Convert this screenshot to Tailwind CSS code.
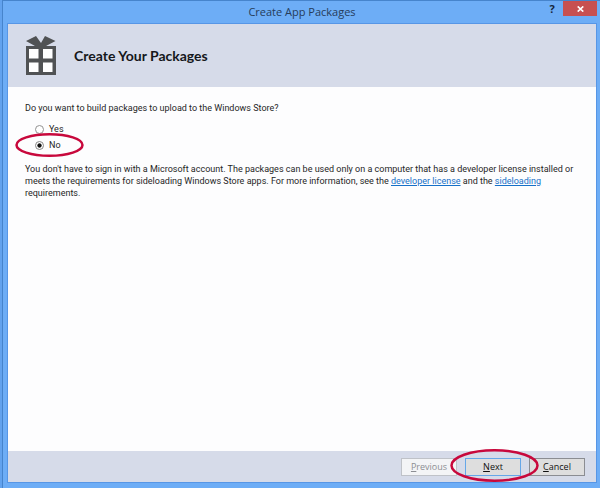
<!DOCTYPE html>
<html lang="en">
<head>
<meta charset="utf-8">
<title>Create App Packages</title>
<script src="https://cdn.jsdelivr.net/npm/@tailwindcss/browser@4"></script>
</head>
<body class="h-screen bg-[#62a2ee] pl-[2px] font-[Roboto,'Noto_Sans',sans-serif] text-[9px] leading-[12px] text-[#262626]">
<div class="flex h-full flex-col border-t border-l border-[#4684cc] bg-[#6dadf6] pr-[3px] pb-[5px] pl-[4px]">
  <header class="grid h-[22px] shrink-0 grid-cols-[1fr_auto_1fr] items-center">
    <h1 class="col-start-2 font-['Open_Sans',sans-serif] text-[11px] leading-[16px] text-[#263c5a]">Create App Packages</h1>
    <div class="flex items-start justify-end self-start">
      <button type="button" aria-label="Help" class="flex h-[15px] w-[22px] items-center justify-center font-['Open_Sans',sans-serif] text-[11px] font-bold text-[#16263b]">?</button>
      <button type="button" aria-label="Close" class="flex h-[15px] w-[34px] items-center justify-center bg-[#c75050]">
        <svg class="h-[6px] w-[7px]" viewBox="0 0 7 6" fill="none" stroke="#fff" stroke-width="1.6"><path d="M.7.4 6.3 5.6M6.3.4.7 5.6"/></svg>
      </button>
    </div>
  </header>
  <main class="flex min-h-0 flex-1 flex-col border border-[#5796e6] bg-[#fdfdfe]">
    <div class="flex h-[63px] shrink-0 items-center gap-[18px] bg-[#d6dbe9] pl-[18px]">
      <svg class="h-[39px] w-[30px]" viewBox="0 0 30 39" aria-hidden="true">
        <path fill="#505254" d="M0 5 10 0 15 7 19 0 29.500 5 20 10H30V39H0V10H9Z"/>
        <path fill="#fff" d="M3 13H12.500V22.500H3ZM17 13H26.500V22.500H17ZM3 26.500H12.500V36H3ZM17 26.500H26.500V36H17Z"/>
      </svg>
      <h2 class="font-[Lato,sans-serif] text-[14px] leading-[20px] font-bold text-[#15171b]">Create Your Packages</h2>
    </div>
    <form class="flex min-h-0 flex-1 flex-col">
      <div class="flex-1 pt-[15px] pr-[20px] pl-[17px]">
        <fieldset>
          <legend>Do you want to build packages to upload to the Windows Store?</legend>
          <div class="flex flex-col items-start gap-[4px] pt-[9px] pl-[10px]">
            <label class="flex items-center gap-[5px]">
              <input type="radio" name="store" class="size-[9px] appearance-none rounded-full border border-[#929292] bg-white">Yes
            </label>
            <label class="relative flex items-center gap-[5px]">
              <input type="radio" name="store" checked class="size-[9px] appearance-none rounded-full border border-[#868686] bg-white bg-radial from-[#111] from-35% to-white to-50%">No
              <svg class="pointer-events-none absolute -top-[6px] -left-[20px] h-[24px] w-[69px]" viewBox="0 0 69 24" fill="none" stroke="#c8083c" stroke-width="2.500" aria-hidden="true"><ellipse cx="34.500" cy="12" rx="33" ry="10.700"/></svg>
            </label>
          </div>
        </fieldset>
        <p class="pt-[12px]">You don't have to sign in with a Microsoft account. The packages can be used only on a computer that has a developer license installed or meets the requirements for sideloading Windows Store apps. For more information, see the <a href="#" class="text-[#1670c8] underline">developer license</a> and the <a href="#" class="text-[#1670c8] underline">sideloading</a> requirements.</p>
      </div>
      <div class="flex h-[31px] shrink-0 items-start justify-end gap-[8px] bg-[#d6dbe9] pt-[7px] pr-[11px] font-['Open_Sans',sans-serif]">
        <button type="button" disabled class="h-[18px] w-[56px] border border-[#bfc2c8] bg-[#f3f4f6] text-[#8c8e93]"><u>P</u>revious</button>
        <div class="relative z-10 flex">
          <button type="submit" class="h-[18px] w-[56px] border border-[#66a7e8] bg-[#dedede] text-[#111]"><u>N</u>ext</button>
          <svg class="pointer-events-none absolute -top-[9px] -left-[15px] h-[33px] w-[89px]" viewBox="0 0 89 33" fill="none" stroke="#c8083c" stroke-width="2.500" aria-hidden="true"><ellipse cx="44.500" cy="16.500" rx="43" ry="15.200"/></svg>
        </div>
        <button type="button" class="h-[18px] w-[56px] border border-[#8b8d92] bg-[#dedede] text-[#111]"><u>C</u>ancel</button>
      </div>
    </form>
  </main>
</div>
</body>
</html>
